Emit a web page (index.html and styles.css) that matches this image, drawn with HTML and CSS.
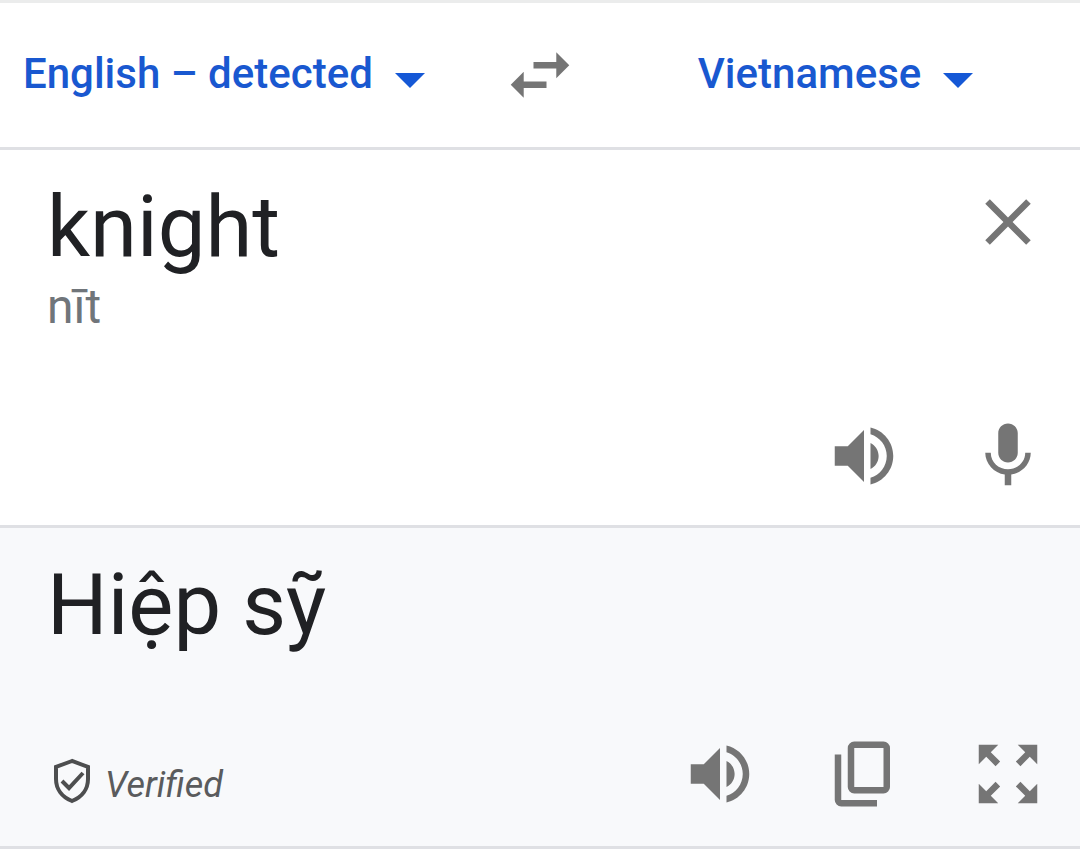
FILE: index.html
```html
<!DOCTYPE html>
<html lang="en">
<head>
<meta charset="utf-8">
<meta name="viewport" content="width=device-width, initial-scale=1">
<title>Translate</title>
<link rel="stylesheet" href="styles.css">
</head>
<body>
<svg class="symbols" aria-hidden="true">
  <symbol id="volume" viewBox="0 0 24 24"><path d="M3 9v6h4l5 5V4L7 9H3zm13.500 3c0-1.770-1.020-3.290-2.500-4.030v8.050c1.480-.730 2.500-2.250 2.500-4.020zM14 3.230v2.060c2.890.860 5 3.540 5 6.710s-2.110 5.850-5 6.710v2.060c4.010-.910 7-4.490 7-8.770s-2.990-7.860-7-8.770z"/></symbol>
</svg>
<header class="languages">
  <button class="language" type="button">English – detected
    <svg class="caret" viewBox="0 0 10 5" aria-hidden="true"><path d="M0 0h10L5 5z"/></svg>
  </button>
  <button class="icon-button" type="button" aria-label="Swap languages">
    <svg class="icon" viewBox="0 0 24 24" aria-hidden="true"><path d="M6.990 11L3 15l3.990 4v-3H14v-2H6.990v-3zM21 9l-3.990-4v3H10v2h7.010v3L21 9z"/></svg>
  </button>
  <button class="language language-target" type="button">Vietnamese
    <svg class="caret" viewBox="0 0 10 5" aria-hidden="true"><path d="M0 0h10L5 5z"/></svg>
  </button>
</header>
<main>
  <section class="panel source">
    <div class="entry">
      <div class="texts">
        <textarea class="phrase" rows="1" aria-label="Source text" spellcheck="false">knight</textarea>
        <p class="phonetic">nīt</p>
      </div>
      <button class="icon-button clear" type="button" aria-label="Clear text">
        <svg class="icon" viewBox="0 0 24 24" aria-hidden="true"><path d="M19 6.410L17.590 5 12 10.590 6.410 5 5 6.410 10.590 12 5 17.590 6.410 19 12 13.410 17.590 19 19 17.590 13.410 12z"/></svg>
      </button>
    </div>
    <div class="toolbar">
      <button class="icon-button" type="button" aria-label="Listen to source text"><svg class="icon" aria-hidden="true"><use href="#volume"/></svg></button>
      <button class="icon-button" type="button" aria-label="Translate by voice">
        <svg class="icon" viewBox="0 0 24 24" aria-hidden="true"><path d="M12 14c1.660 0 3-1.340 3-3V5c0-1.660-1.340-3-3-3S9 3.340 9 5v6c0 1.660 1.340 3 3 3zm5.300-3c0 3-2.540 5.100-5.300 5.100S6.700 14 6.700 11H5c0 3.410 2.720 6.230 6 6.720V21h2v-3.280c3.280-.480 6-3.300 6-6.720z"/></svg>
      </button>
    </div>
  </section>
  <section class="panel result">
    <p class="phrase" lang="vi">Hiệp sỹ</p>
    <div class="toolbar">
      <div class="verified">
        <svg class="shield" viewBox="0 0 40 46" aria-hidden="true"><path d="M20 3L4 9v12c0 10 6 18 16 22 10-4 16-12 16-22V9z"/><path d="M10 23l7 7 14-15"/></svg>
        <span class="verified-label">Verified</span>
      </div>
      <button class="icon-button" type="button" aria-label="Listen to translation"><svg class="icon" aria-hidden="true"><use href="#volume"/></svg></button>
      <button class="icon-button" type="button" aria-label="Copy translation">
        <svg class="icon" viewBox="0 0 24 24" aria-hidden="true"><path fill-rule="evenodd" d="M9 2h9a2 2 0 0 1 2 2v12a2 2 0 0 1-2 2H9a2 2 0 0 1-2-2V4a2 2 0 0 1 2-2zm0 2v12h9V4zM3 6h2v14h11v2H5a2 2 0 0 1-2-2z"/></svg>
      </button>
      <button class="icon-button" type="button" aria-label="Show full screen">
        <svg class="icon" viewBox="0 0 24 24" aria-hidden="true"><path d="M15 3l2.300 2.300-2.890 2.870 1.420 1.420L18.700 6.700 21 9V3zM3 9l2.300-2.300 2.870 2.890 1.420-1.420L6.700 5.300 9 3H3zm6 12l-2.300-2.300 2.890-2.870-1.420-1.420L5.300 17.300 3 15v6zm12-6l-2.300 2.300-2.870-2.890-1.420 1.420 2.890 2.870L15 21h6z"/></svg>
      </button>
    </div>
  </section>
</main>
</body>
</html>
```
FILE: styles.css
```css
* {
  box-sizing: border-box;
}

body {
  margin: 0;
  background: #fff;
  color: #202124;
  font-family: Roboto, "Liberation Sans", sans-serif;
}

p {
  margin: 0;
}

button {
  margin: 0;
  padding: 0;
  border: 0;
  background: none;
  font: inherit;
  cursor: pointer;
}

.symbols {
  display: none;
}

.languages {
  display: grid;
  grid-template-columns: 1fr auto 1fr;
  align-items: center;
  padding: 33px 0;
  border-top: 3px solid #ebecec;
  border-bottom: 3px solid #dfe0e4;
}

.language {
  display: flex;
  align-items: center;
  gap: 22px;
  padding: 0 0 2px 23px;
  color: #1958d0;
  font-size: 42px;
  font-weight: 500;
  line-height: 48px;
  white-space: nowrap;
}

.language-target {
  justify-content: center;
  padding-left: 12px;
}

.caret {
  width: 30px;
  height: 15px;
  margin-top: 12px;
  fill: #1558d6;
}

.icon-button {
  display: block;
  flex: none;
  color: #757575;
}

.icon {
  display: block;
  width: 78px;
  height: 78px;
  fill: currentColor;
}

.panel {
  padding: 27px 33px 33px 47px;
  border-bottom: 3px solid #dfe0e4;
}

.source {
  padding-bottom: 30px;
}

.result {
  background: #f8f9fb;
}

.entry {
  display: flex;
  align-items: flex-start;
}

.texts {
  flex: 1;
}

.phrase {
  display: block;
  width: 100%;
  margin: 0;
  padding: 0;
  border: 0;
  outline: 0;
  background: none;
  color: inherit;
  font: 400 85px/100px Roboto, "Liberation Sans", sans-serif;
  resize: none;
}

textarea.phrase {
  overflow: hidden;
}

.phonetic {
  color: #70757a;
  font-size: 48px;
  line-height: 60px;
}

.clear {
  margin-top: 6px;
}

.toolbar {
  display: flex;
  justify-content: flex-end;
  gap: 66px;
  margin-top: 80px;
}

.verified {
  display: flex;
  align-items: center;
  gap: 13px;
  margin-right: auto;
  padding: 14px 0 0 5px;
  color: #5a5b5d;
  font-size: 36px;
  font-style: italic;
  line-height: 42px;
}

.verified-label {
  padding-top: 8px;
}

.shield {
  width: 40px;
  height: 46px;
  fill: none;
  stroke: #4d4e4f;
  stroke-width: 4;
}
```
